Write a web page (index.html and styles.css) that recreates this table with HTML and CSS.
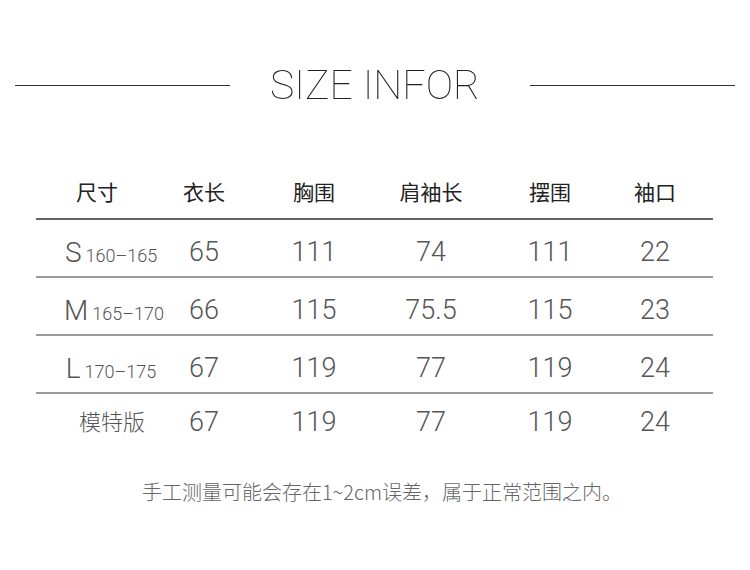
FILE: index.html
```html
<!DOCTYPE html>
<html lang="zh">
<head>
<meta charset="utf-8">
<link rel="stylesheet" href="styles.css">
</head>
<body>
<div class="page">
  <div class="title-row">
    <span class="rule"></span>
    <h1 class="title">SIZE INFOR</h1>
    <span class="rule"></span>
  </div>
  <div class="table">
    <div class="row head">
      <div class="cell">尺寸</div>
      <div class="cell">衣长</div>
      <div class="cell">胸围</div>
      <div class="cell">肩袖长</div>
      <div class="cell">摆围</div>
      <div class="cell">袖口</div>
    </div>
    <div class="row">
      <div class="cell size"><span class="letter">S</span><span class="range">160–165</span></div>
      <div class="cell">65</div>
      <div class="cell">111</div>
      <div class="cell">74</div>
      <div class="cell">111</div>
      <div class="cell">22</div>
    </div>
    <div class="row">
      <div class="cell size"><span class="letter">M</span><span class="range">165–170</span></div>
      <div class="cell">66</div>
      <div class="cell">115</div>
      <div class="cell">75.5</div>
      <div class="cell">115</div>
      <div class="cell">23</div>
    </div>
    <div class="row">
      <div class="cell size"><span class="letter">L</span><span class="range">170–175</span></div>
      <div class="cell">67</div>
      <div class="cell">119</div>
      <div class="cell">77</div>
      <div class="cell">119</div>
      <div class="cell">24</div>
    </div>
    <div class="row last">
      <div class="cell size cn">模特版</div>
      <div class="cell">67</div>
      <div class="cell">119</div>
      <div class="cell">77</div>
      <div class="cell">119</div>
      <div class="cell">24</div>
    </div>
  </div>
  <p class="note">手工测量可能会存在1~2cm误差，属于正常范围之内。</p>
</div>
</body>
</html>
```

FILE: styles.css
```css
* { box-sizing: border-box; }
html, body { margin: 0; padding: 0; background: #fff; }
body { font-family: "Noto Sans CJK SC", sans-serif; }
.page { width: 750px; height: 570px; padding-top: 60px; }

.title-row {
  display: flex;
  align-items: center;
  padding: 0 15px;
  height: 50px;
}
.rule { height: 1px; background: #333; flex: 0 0 215px; }
.rule:last-child { flex: 0 0 205px; }
.title {
  flex: 1;
  margin: 0;
  padding-right: 10px;
  text-align: center;
  font-family: Roboto, "Liberation Sans", sans-serif;
  font-weight: 100;
  font-size: 41px;
  color: #222;
  letter-spacing: 0;
  line-height: 50px;
  will-change: transform;
}

.table { margin: 57px 37px 0 36px; }
.row {
  display: grid;
  grid-template-columns: 122px 92px 128px 106px 132px 78px 1fr;
  align-items: center;
  height: 58px;
  border-bottom: 2px solid #9a9a9a;
  font-family: Roboto, "Liberation Sans", sans-serif;
  font-weight: 300;
  font-size: 27px;
  color: #555;
  padding-top: 8px;
}
.row.head {
  height: 53px;
  border-bottom-color: #666;
  font-family: "Noto Sans CJK SC", sans-serif;
  font-weight: 400;
  font-size: 21px;
  color: #222;
  padding-top: 0;
  padding-bottom: 4px;
}
.row.last { border-bottom: none; height: 56px; padding-top: 0; }
.cell { text-align: center; white-space: nowrap; }
.size { padding-left: 28px; }
.letter { font-size: 28px; }
.range { font-size: 18px; margin-left: 4px; }
.cn {
  font-family: "Noto Sans CJK SC", sans-serif;
  font-weight: 300;
  font-size: 22px;
  color: #555;
  padding-left: 30px;
  padding-bottom: 4px;
}

.note {
  margin: 27px 0 0;
  padding-left: 14px;
  text-align: center;
  font-size: 20px;
  color: #666;
  font-weight: 300;
}
```
